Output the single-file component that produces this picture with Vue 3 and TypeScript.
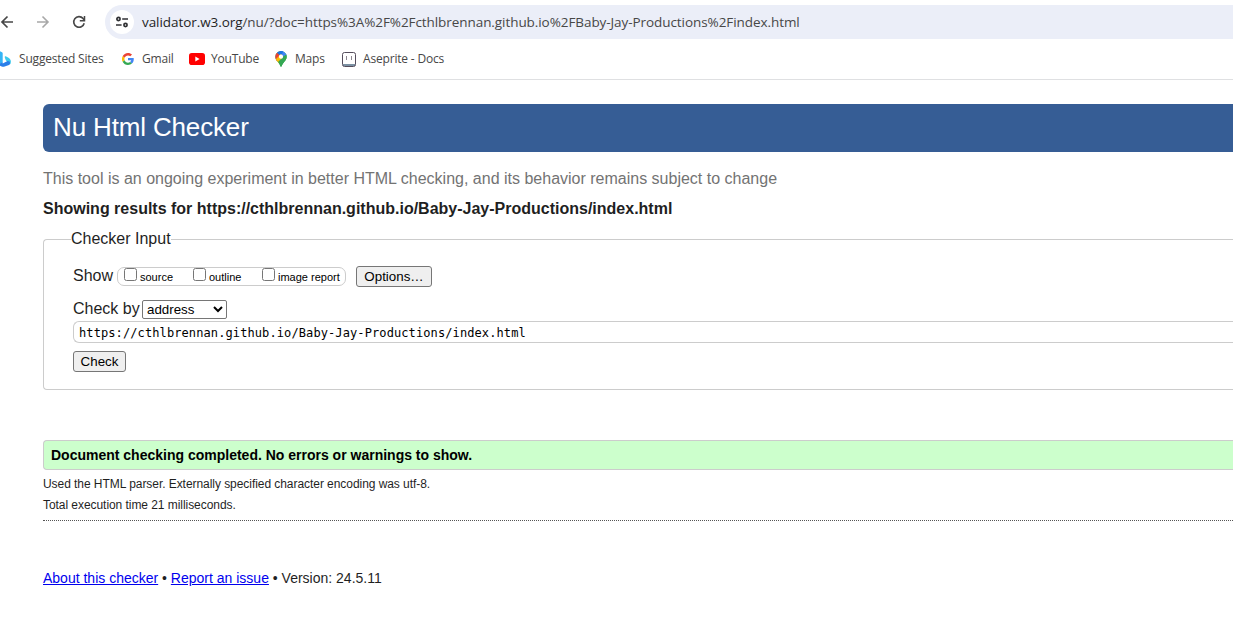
<script setup lang="ts">
import { ref } from 'vue'

const url = 'https://cthlbrennan.github.io/Baby-Jay-Productions/index.html'
const address = ref(url)
const mode = ref('address')
const views = ref([
  { label: 'source', on: false },
  { label: 'outline', on: false },
  { label: 'image report', on: false },
])
</script>

<template>
  <div class="window">
    <header class="browser">
      <div class="nav">
        <svg class="back" width="14" height="16" viewBox="0 0 14 16"><path d="M13 8H2M7.500 2.500 2 8l5.500 5.500" fill="none" stroke="#474747" stroke-width="1.700" /></svg>
        <svg class="forward" width="14" height="16" viewBox="0 0 14 16"><path d="M1 8h11M6.500 2.500 12 8l-5.500 5.500" fill="none" stroke="#a8a8a8" stroke-width="1.600" /></svg>
        <svg class="reload" width="14" height="16" viewBox="0 0 14 16"><path d="M12.200 9.200A5.300 5.300 0 1 1 11 4.400L12.300 6" fill="none" stroke="#474747" stroke-width="1.600" /><path d="M12.500 2v4.700H7.800" fill="none" stroke="#474747" stroke-width="1.500" /></svg>
        <div class="omnibox">
          <span class="site-info">
            <svg width="14" height="14" viewBox="0 0 14 14" fill="none" stroke="#303134" stroke-width="1.700"><circle cx="3.500" cy="4" r="1.600" /><path d="M7.200 4H13M1 10h5.600" /><circle cx="10.500" cy="10" r="1.600" /></svg>
          </span>
          <span class="location"><b>validator.w3.org</b>/nu/?doc=https%3A%2F%2Fcthlbrennan.github.io%2FBaby-Jay-Productions%2Findex.html</span>
        </div>
      </div>
      <nav class="bookmarks">
        <span class="mark bing">
          <svg width="12" height="16" viewBox="0 0 12 16"><path d="M0 .2l2 1c.5.300.7.700.7 1.200v9L0 13z" fill="#35b4f5" /><path d="M4.700 5.800c.1-.5.600-.7 1.100-.5l2.700 1.500c1.500.9 2.400 2.200 2.400 4 0 1.200-.4 2.200-1.200 3 .2-1.400-.3-2.400-1.500-3l-1.700-.8c-.4-.2-.6-.5-.8-.9l-.9-2.500z" fill="#3cc9ec" /><path d="M0 12.500l2.700-1.300v1.200L7 10.200c1.700-.6 3.200.4 3.100 2 0 .8-.4 1.400-1.100 1.900L4.700 15.500c-1 .4-2 .4-3 0L0 14.700z" fill="#2a7fe9" /></svg>
          <span>Suggested Sites</span>
        </span>
        <span class="mark gmail">
          <svg width="12" height="12" viewBox="0 0 48 48"><path fill="#ea4335" d="M24 9.500c3.500 0 6.700 1.200 9.200 3.600l6.900-6.900C35.900 2.400 30.500 0 24 0 14.600 0 6.500 5.400 2.600 13.200l8 6.200C12.400 13.700 17.700 9.500 24 9.500z" /><path fill="#4285f4" d="M47 24.600c0-1.600-.2-3.100-.4-4.600H24v9h12.900c-.6 3-2.300 5.500-4.800 7.200l7.700 6C44.400 38 47 31.800 47 24.600z" /><path fill="#fbbc05" d="M10.500 28.600a14.500 14.500 0 0 1 0-9.200l-8-6.200a24 24 0 0 0 0 21.600z" /><path fill="#34a853" d="M24 48c6.500 0 11.900-2.100 15.900-5.800l-7.700-6c-2.200 1.400-4.900 2.300-8.200 2.300-6.300 0-11.600-4.200-13.500-9.900l-8 6.200C6.500 42.600 14.600 48 24 48z" /></svg>
          <span>Gmail</span>
        </span>
        <span class="mark youtube">
          <svg width="16" height="12" viewBox="0 0 16 12"><rect width="16" height="12" rx="2.800" fill="#f00" /><path d="M6.300 3.500v5l4.300-2.500z" fill="#fff" /></svg>
          <span>YouTube</span>
        </span>
        <span class="mark maps">
          <svg width="12" height="16" viewBox="0 0 12 16"><defs><clipPath id="pin"><path d="M6 0a5.700 5.700 0 0 0-5.700 5.700c0 2.300 1.100 3.500 2.400 5C4 12.200 4.900 13.600 5.300 15c.2.700.4 1 .7 1s.5-.3.700-1c.4-1.400 1.300-2.800 2.600-4.300 1.300-1.500 2.400-2.700 2.400-5A5.700 5.700 0 0 0 6 0z" /></clipPath></defs><g clip-path="url(#pin)"><path d="M0 0h12v16H0z" fill="#34a853" /><path d="M5.500-1 13-1v5.500L6 6z" fill="#4285f4" /><path d="M-1 1 2 1.200 6 5.800 1 11-1 8z" fill="#ea4335" /><path d="M1 1 4-1h5L6 5z" fill="#1a73e8" /><path d="M0 9 6 3l3 4-6.200 6z" fill="#fbbc04" /><path d="M12 3v6l-6 7-3-5L9 5z" fill="#34a853" /></g><circle cx="6" cy="5.700" r="2.100" fill="#fff" /></svg>
          <span>Maps</span>
        </span>
        <span class="mark aseprite">
          <svg width="14" height="15" viewBox="0 0 14 15"><path d="M1 12h12v2H1z" fill="#7c91a3" /><rect x=".5" y=".5" width="13" height="14" rx="2" fill="none" stroke="#554d5c" /><path d="M4.500 4v4M9.500 4v4" stroke="#8d8790" /></svg>
          <span>Aseprite - Docs</span>
        </span>
      </nav>
    </header>

    <main class="page">
      <h1>Nu Html Checker</h1>
      <p class="tagline">This tool is an ongoing experiment in better HTML checking, and its behavior remains subject to change</p>
      <h2>Showing results for {{ url }}</h2>

      <fieldset class="checker">
        <legend>Checker Input</legend>
        <div class="show">
          <span class="show-label">Show</span>
          <div class="views">
            <label v-for="v in views" :key="v.label"><input v-model="v.on" type="checkbox" /><span>{{ v.label }}</span></label>
          </div>
          <button class="options" type="button">Options…</button>
        </div>
        <div class="by">
          <span>Check by</span>
          <select v-model="mode"><option>address</option></select>
        </div>
        <input v-model="address" class="address" type="text" spellcheck="false" />
        <button class="check" type="button">Check</button>
      </fieldset>

      <p class="success">Document checking completed. No errors or warnings to show.</p>
      <p class="detail">Used the HTML parser. Externally specified character encoding was utf-8.</p>
      <p class="detail">Total execution time 21 milliseconds.</p>
      <footer>
        <a href="#">About this checker</a> • <a href="#">Report an issue</a> • <span>Version: 24.5.11</span>
      </footer>
    </main>
  </div>
</template>

<style>
body { margin: 0; background: #fff; overflow: hidden; }
</style>

<style scoped>
.window {
  width: 100%;
  height: 622px;
  overflow: hidden;
  font-family: "Liberation Sans", Arial, sans-serif;
  color: #1f1f1f;
}
.window * { box-sizing: border-box; }
svg { display: block; flex: none; }

.browser {
  height: 80px;
  border-bottom: 1px solid #dfe0e2;
  font-family: "Open Sans", "Noto Sans", sans-serif;
}
.nav { display: flex; align-items: center; height: 44px; }
.forward { margin-left: 22px; }
.reload { margin-left: 22px; }
.omnibox {
  display: flex;
  align-items: center;
  flex: 1;
  height: 34px;
  margin-left: 19px;
  padding-left: 5px;
  border-radius: 17px 0 0 17px;
  background: #ebeef8;
}
.site-info {
  display: grid;
  place-items: center;
  width: 24px;
  height: 24px;
  border-radius: 50%;
  background: #fff;
}
.location { margin-left: 8px; font-size: 13.5px; letter-spacing: -0.068px; white-space: nowrap; color: #474747; }
.location b { font-weight: 400; color: #1f1f1f; }

.bookmarks { display: flex; height: 30px; font-size: 12px; letter-spacing: -0.18px; color: #474747; }
.mark { display: flex; align-items: center; white-space: nowrap; }
.mark span { margin-top: -1px; }
.bing { width: 122px; gap: 7px; }
.gmail { width: 67px; gap: 8px; }
.youtube { width: 86px; gap: 6px; }
.maps { width: 67px; gap: 8px; }
.aseprite { gap: 7px; }

.page { margin-left: 43px; padding-top: 24px; }
h1 {
  height: 48px;
  margin: 0;
  padding-left: 10px;
  border-radius: 6px 0 0 6px;
  background: #365d95;
  color: #fff;
  font-size: 26px;
  font-weight: 400;
  letter-spacing: -0.15px;
  line-height: 46px;
}
.tagline { margin: 17px 0 0; font-size: 16px; line-height: 20px; color: #737373; white-space: nowrap; }
h2 { margin: 10px 0 0; font-size: 16px; line-height: 20px; font-weight: 700; white-space: nowrap; }

.checker {
  height: 161px;
  margin: 10px 0 0;
  padding: 16px 0 0 29px;
  border: 1px solid #ccc;
  border-right: 0;
  border-radius: 4px 0 0 4px;
}
legend { margin-left: -2px; padding: 0; font-size: 16px; line-height: 20px; height: 20px; }
.show { display: flex; align-items: center; height: 22px; }
.show-label { width: 44px; font-size: 16px; }
.views {
  display: flex;
  width: 229px;
  height: 19px;
  padding-left: 6px;
  border: 1px solid #ccc;
  border-radius: 7px;
}
.views label { display: flex; width: 69px; font-size: 11px; white-space: nowrap; color: #000; }
.views span { margin: 3px 0 0 3px; line-height: 13px; }
.views input { flex: none; width: 13px; height: 13px; margin: 0; }
.options { margin-left: 10px; }
button {
  display: block;
  height: 21px;
  padding: 0;
  border: 1px solid #767676;
  border-radius: 3px;
  background: #efefef;
  color: #000;
  font: 13.333px/18px "Liberation Sans", Arial, sans-serif;
}
.options { width: 76px; padding-top: 1px; }
.check { width: 53px; margin-top: 8px; }
.by { display: flex; align-items: center; height: 20px; margin-top: 12px; font-size: 16px; }
.by > span { width: 69px; white-space: nowrap; }
select {
  width: 85px;
  height: 19px;
  border: 1px solid #767676;
  border-radius: 2px;
  background: #fff;
  color: #000;
  font: 13.333px "Liberation Sans", Arial, sans-serif;
}
.address {
  display: block;
  width: 100%;
  height: 22px;
  margin-top: 2px;
  padding: 2px 5px 0;
  border: 1px solid #ccc;
  border-right: 0;
  border-radius: 6px 0 0 6px;
  color: #000;
  font: 12px "DejaVu Sans Mono", monospace;
  letter-spacing: 0.1px;
}

.success {
  height: 30px;
  margin: 50px 0 0;
  padding-left: 7px;
  border: 1px solid #ccc;
  border-right: 0;
  border-radius: 4px 0 0 4px;
  background: #cfc;
  color: #000;
  font-size: 14px;
  font-weight: 700;
  line-height: 28px;
}
.detail { height: 21px; margin: 0; font-size: 12px; letter-spacing: -0.055px; line-height: 21px; }
.success + .detail { margin-top: 4px; }
footer { margin-top: 4px; padding-top: 47px; border-top: 1px dotted #555; font-size: 14px; line-height: 20px; }
footer a { color: #00e; }
</style>
